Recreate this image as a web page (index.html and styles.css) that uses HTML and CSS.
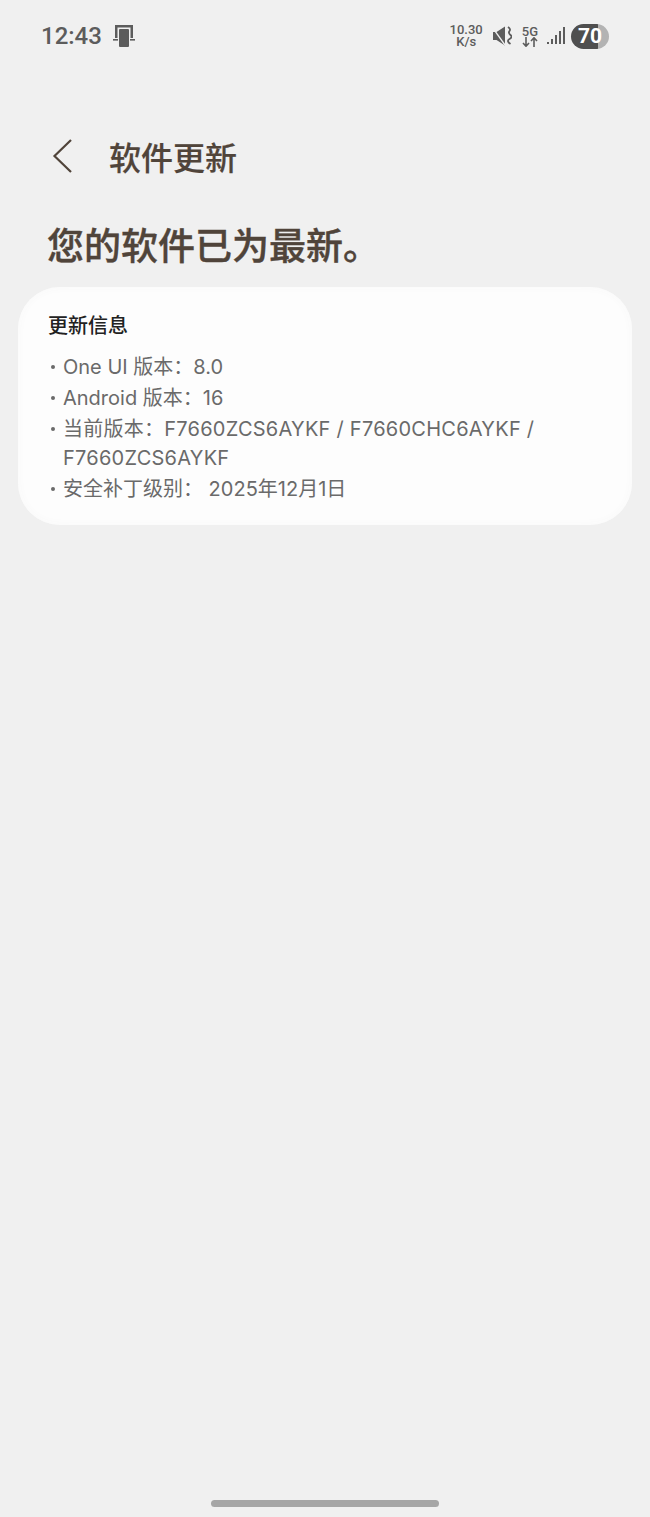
FILE: index.html
```html
<!DOCTYPE html>
<html lang="zh-CN">
<head>
    <meta charset="UTF-8">
    <meta name="viewport" content="width=device-width, initial-scale=1.0">
    <title>软件更新</title>
    <link rel="stylesheet" href="styles.css">
</head>
<body>

<div class="status-bar">
    <div class="status-left">
        <span class="clock">12:43</span>
        <svg class="phone-icon" width="22" height="22" viewBox="0 0 22 22">
            <path d="M2 0h18v13h-2.500v-10.500h-13v10.500h-2.500z" fill="#5c5c5c"/>
            <rect x="6" y="4" width="10" height="18" rx="1" fill="#5c5c5c"/>
            <rect x="0" y="14" width="5" height="1.600" fill="#5c5c5c"/>
            <rect x="17" y="14" width="5" height="1.600" fill="#5c5c5c"/>
        </svg>
    </div>
    <div class="status-right">
        <div class="net-speed"><span>10.30</span><span>K/s</span></div>
        <svg class="mute-icon" width="20" height="20" viewBox="0 0 20 20">
            <path d="M1 6h3.500l8.500-5.500v19l-8.500-5.500h-3.500z" fill="#5c5c5c"/>
            <path d="M0 1l13 18" stroke="#f0f0f0" stroke-width="1.300"/>
            <path d="M16 1q3 2 1.500 4t1 4t-1 4t1 5" fill="none" stroke="#5c5c5c" stroke-width="1.800"/>
        </svg>
        <div class="net-type">
            <span>5G</span>
            <svg width="16" height="10" viewBox="0 0 16 10">
                <path d="M4 0v9M1 6l3 3.200l3-3.200" fill="none" stroke="#5c5c5c" stroke-width="1.600"/>
                <path d="M12 10v-9M9 4l3-3.200l3 3.200" fill="none" stroke="#5c5c5c" stroke-width="1.600"/>
            </svg>
        </div>
        <svg class="signal-icon" width="18" height="18" viewBox="0 0 18 18">
            <rect x="0" y="15" width="2" height="2" fill="#5c5c5c"/>
            <rect x="4" y="12" width="2" height="5" fill="#5c5c5c"/>
            <rect x="8" y="8" width="2" height="9" fill="#5c5c5c"/>
            <rect x="12" y="4" width="2" height="13" fill="#5c5c5c"/>
            <rect x="16" y="0" width="2" height="17" fill="#5c5c5c"/>
        </svg>
        <div class="battery"><span class="battery-level">70</span></div>
    </div>
</div>

<div class="title-bar">
    <svg class="back-icon" width="20" height="36" viewBox="0 0 20 36">
        <path d="M19 2l-16.500 16l16.500 16" fill="none" stroke="#50443a" stroke-width="2.200"/>
    </svg>
    <h1>软件更新</h1>
</div>

<h2 class="headline">您的软件已为最新。</h2>

<div class="info-card">
    <h3>更新信息</h3>
    <ul>
        <li>One UI 版本：8.0</li>
        <li>Android 版本：16</li>
        <li class="version-line">当前版本：F7660ZCS6AYKF / F7660CHC6AYKF / F7660ZCS6AYKF</li>
        <li>安全补丁级别： 2025年12月1日</li>
    </ul>
</div>

<div class="home-bar"></div>

</body>
</html>
```

FILE: styles.css
```css
html, body {
    height: 100%;
}
body {
    font-family: "Inter", "Noto Sans CJK SC", sans-serif;
    background-color: #f0f0f0;
    margin: 0;
    padding: 0;
    height: 1517px;
    box-sizing: border-box;
    display: flex;
    flex-direction: column;
    overflow: hidden;
}

/* Status bar */
.status-bar {
    display: flex;
    justify-content: space-between;
    align-items: center;
    height: 24px;
    padding: 24px 41px 0 41px;
    color: #5c5c5c;
}
.status-left {
    display: flex;
    align-items: center;
    gap: 11px;
}
.clock {
    font-family: "Roboto", sans-serif;
    font-size: 24px;
    font-weight: 500;
}
.status-right {
    display: flex;
    align-items: center;
    gap: 8px;
}
.net-speed {
    display: flex;
    flex-direction: column;
    align-items: center;
    font-family: "Roboto", sans-serif;
    font-size: 13px;
    line-height: 12px;
    font-weight: 500;
    margin-right: 1px;
}
.mute-icon {
    margin-right: 2px;
}
.net-type {
    display: flex;
    flex-direction: column;
    align-items: center;
    font-family: "Roboto", sans-serif;
    font-size: 13px;
    line-height: 11px;
    font-weight: 500;
    margin-right: 1px;
}
.battery {
    width: 38px;
    height: 25px;
    border-radius: 13px;
    margin-left: -2px;
    background: linear-gradient(to right, #4f4f4f 70%, #b3b3b3 70%);
    display: flex;
    align-items: center;
    justify-content: center;
}
.battery-level {
    font-family: "Roboto", sans-serif;
    color: #fff;
    font-size: 21px;
    font-weight: 700;
}

/* Title */
.title-bar {
    display: flex;
    align-items: center;
    margin-top: 90px;
    padding-left: 52px;
    height: 36px;
}
.back-icon {
    margin-right: 37px;
}
h1 {
    margin: 0;
    font-size: 32px;
    font-weight: 500;
    color: #50443a;
    -webkit-text-stroke: 0.2px #50443a;
}
.headline {
    margin: 49px 0 0 47px;
    font-size: 37px;
    line-height: 48px;
    font-weight: 500;
    color: #50443a;
    -webkit-text-stroke: 0.4px #50443a;
}

/* Card */
.info-card {
    margin: 16px 18px 0 18px;
    padding: 25px 30px 20px 30px;
    height: 238px;
    box-sizing: border-box;
    background-color: #fdfdfd;
    border-radius: 42px;
    box-shadow: inset 0 0 10px #f8f8f8;
}
h3 {
    margin: 0 0 13px 0;
    font-size: 20px;
    line-height: 28px;
    font-weight: 500;
    color: #222;
}
ul {
    list-style: none;
    margin: 0;
    padding: 0;
}
li {
    position: relative;
    padding-left: 15px;
    font-size: 20px;
    line-height: 28.500px;
    margin-bottom: 2.500px;
    color: #6a6a6a;
}
li::before {
    content: "";
    position: absolute;
    left: 3px;
    top: 12px;
    width: 4px;
    height: 4px;
    border-radius: 50%;
    background-color: #6a6a6a;
}
.version-line {
    letter-spacing: 0.25px;
}

.home-bar {
    width: 228px;
    height: 7px;
    margin: auto auto 10px auto;
    background-color: #a6a6a6;
    border-radius: 4px;
}
```
